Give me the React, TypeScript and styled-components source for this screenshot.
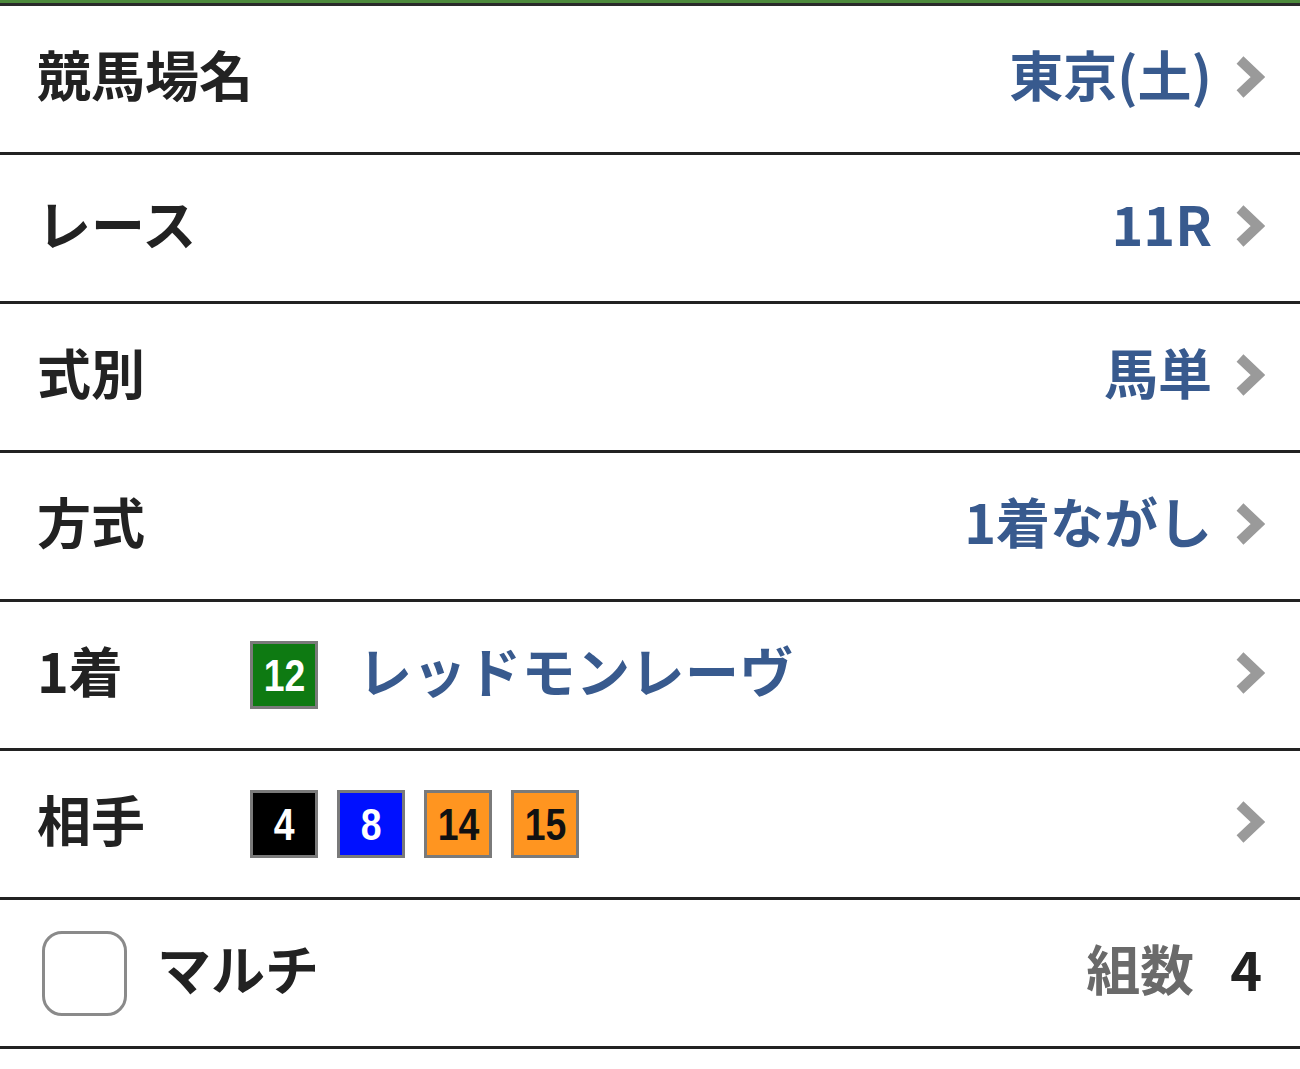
import React from "react";
import styled, { createGlobalStyle } from "styled-components";

const Global = createGlobalStyle`
  html, body { margin: 0; padding: 0; background: #fff; }
  body { font-family: "Noto Sans CJK JP", "Noto Sans", sans-serif; }
`;

const List = styled.div`
  border-top: 3px solid #4d8a3c;
  box-shadow: inset 0 3px 0 #2a2a2a;
  padding-top: 3px;
`;

const Row = styled.div`
  box-sizing: border-box;
  height: 149px;
  display: flex;
  align-items: center;
  padding: 0 35px 0 37px;
  border-bottom: 3px solid #222;
`;

const Text = styled.div`
  font-size: 54px;
  font-weight: 700;
  line-height: 1.2;
  padding-bottom: 10px;
`;

const Label = styled(Text)<{ $w?: number }>`
  color: #222;
  width: ${(p) => (p.$w ? `${p.$w}px` : "auto")};
  flex-shrink: 0;
`;

const Spacer = styled.div`
  flex: 1;
`;

const Value = styled(Text)`
  color: #385a8e;
`;

const Name = styled(Value)`
  margin-left: 40px;
  letter-spacing: 0.5px;
`;

const ChevronWrap = styled.div`
  width: 30px;
  height: 44px;
  margin-left: 23px;
  margin-bottom: 4px;
  display: flex;
  align-items: center;
  justify-content: center;
`;

const Badges = styled.div`
  display: flex;
  gap: 19px;
`;

const Badge = styled.div<{ $bg: string; $fg: string }>`
  box-sizing: border-box;
  width: 68px;
  height: 68px;
  border: 3px solid #7a7a7a;
  background: ${(p) => p.$bg};
  color: ${(p) => p.$fg};
  display: flex;
  align-items: center;
  justify-content: center;
  font-family: "Liberation Sans", Arial, sans-serif;
  font-weight: 700;
  font-size: 44px;
`;

const BadgeNum = styled.span`
  display: inline-block;
  transform: scaleX(0.85);
  line-height: 1;
  padding-top: 2px;
`;

const Check = styled.div`
  box-sizing: border-box;
  width: 85px;
  height: 85px;
  margin-left: 5px;
  border: 3.5px solid #8a8a8a;
  border-radius: 20px;
  flex-shrink: 0;
`;

const MultiLabel = styled(Label)`
  margin-left: 30px;
`;

const CountLabel = styled(Text)`
  color: #6a6a6a;
`;

const Count = styled(Text)`
  color: #222;
  margin-left: 36px;
  margin-right: 3px;
`;

const Chevron = () => (
  <ChevronWrap>
    <svg width="30" height="44" viewBox="0 0 30 44">
      <polyline
        points="5,5 23,22 5,39"
        fill="none"
        stroke="#9a9a9a"
        strokeWidth="10"
        strokeLinecap="butt"
        strokeLinejoin="miter"
      />
    </svg>
  </ChevronWrap>
);

const rivals = [
  { n: 4, bg: "#000", fg: "#fff" },
  { n: 8, bg: "#0010ff", fg: "#fff" },
  { n: 14, bg: "#ff9520", fg: "#111" },
  { n: 15, bg: "#ff9520", fg: "#111" },
];

export default function App() {
  return (
    <>
      <Global />
      <List>
        <Row>
          <Label>競馬場名</Label>
          <Spacer />
          <Value>東京(土)</Value>
          <Chevron />
        </Row>
        <Row>
          <Label>レース</Label>
          <Spacer />
          <Value>11R</Value>
          <Chevron />
        </Row>
        <Row>
          <Label>式別</Label>
          <Spacer />
          <Value>馬単</Value>
          <Chevron />
        </Row>
        <Row>
          <Label>方式</Label>
          <Spacer />
          <Value>1着ながし</Value>
          <Chevron />
        </Row>
        <Row>
          <Label $w={213}>1着</Label>
          <Badge $bg="#0e7a12" $fg="#fff">
            <BadgeNum>12</BadgeNum>
          </Badge>
          <Name>レッドモンレーヴ</Name>
          <Spacer />
          <Chevron />
        </Row>
        <Row>
          <Label $w={213}>相手</Label>
          <Badges>
            {rivals.map((r) => (
              <Badge key={r.n} $bg={r.bg} $fg={r.fg}>
                <BadgeNum>{r.n}</BadgeNum>
              </Badge>
            ))}
          </Badges>
          <Spacer />
          <Chevron />
        </Row>
        <Row>
          <Check />
          <MultiLabel>マルチ</MultiLabel>
          <Spacer />
          <CountLabel>組数</CountLabel>
          <Count>4</Count>
        </Row>
      </List>
    </>
  );
}
